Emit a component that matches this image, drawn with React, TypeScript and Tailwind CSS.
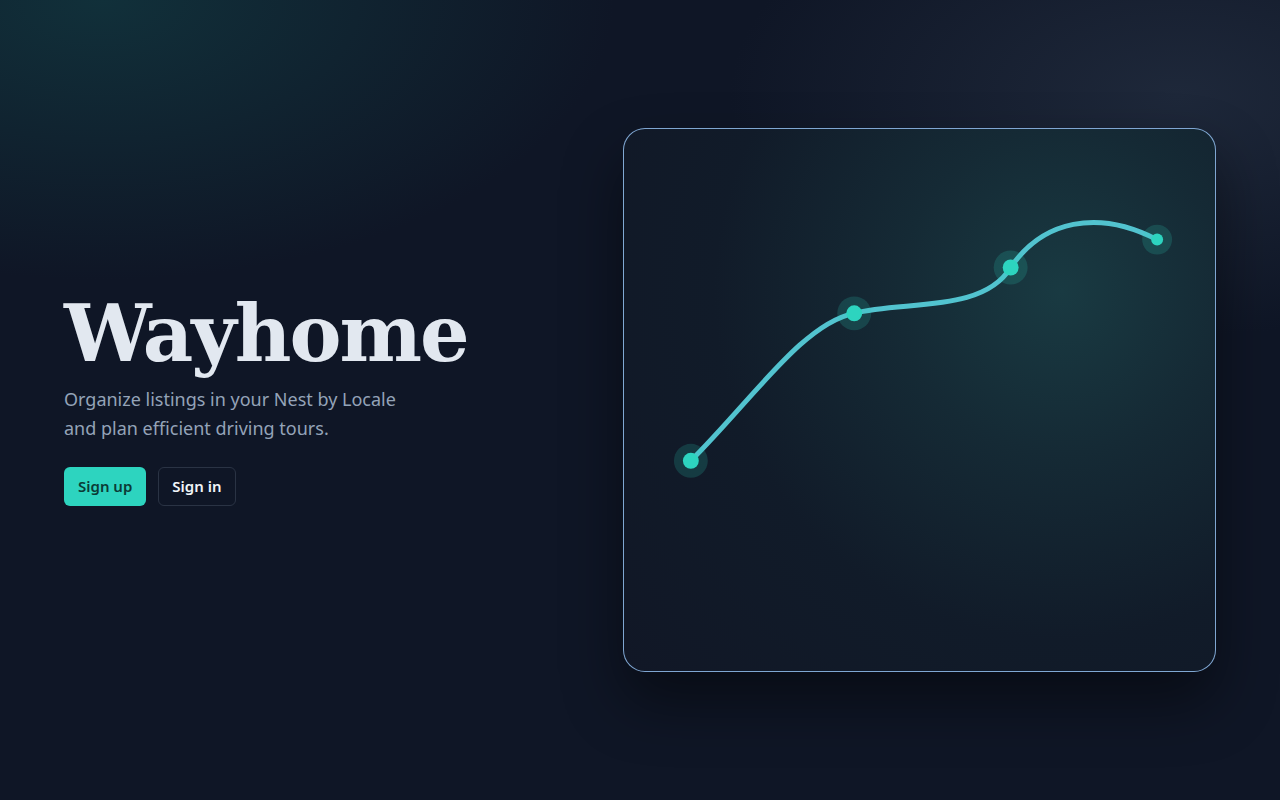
import React from "react";

const points = [
  { x: 67, y: 333, r: 8, halo: 17 },
  { x: 231, y: 185, r: 8, halo: 17 },
  { x: 388, y: 139, r: 8, halo: 17 },
  { x: 535, y: 111, r: 6, halo: 15 },
];

const RouteCard: React.FC = () => (
  <div className="w-[593px] h-[544px] shrink-0 rounded-[22px] border border-[#93bff0]/85 bg-[radial-gradient(circle_at_74%_30%,#193a42_0%,#152a35_28%,#111b29_60%,#111726_100%)] shadow-[0_30px_60px_rgba(0,0,0,0.45)] overflow-hidden">
    <svg viewBox="0 0 593 544" className="w-full h-full">
      <path
        d="M67 333 C130 270, 180 195, 231 185 C280 172, 360 185, 388 139 C420 92, 475 80, 535 111"
        fill="none"
        stroke="#52c3cf"
        strokeWidth="5"
        strokeLinecap="round"
      />
      {points.map((p) => (
        <g key={p.x}>
          <circle cx={p.x} cy={p.y} r={p.halo} fill="#2dd4bf" fillOpacity="0.18" />
          <circle cx={p.x} cy={p.y} r={p.r} fill="#2dd4bf" />
        </g>
      ))}
    </svg>
  </div>
);

export default function App() {
  return (
    <div className="relative w-full h-[800px] overflow-hidden bg-[#0f1626] font-['Noto_Sans',sans-serif]">
      <div className="absolute inset-0 bg-[radial-gradient(ellipse_40%_35%_at_8%_0%,#11303a_0%,rgba(15,22,38,0)_100%)]" />
      <div className="absolute inset-0 bg-[radial-gradient(ellipse_35%_30%_at_92%_12%,#1e283a_0%,rgba(15,22,38,0)_100%)]" />
      <div className="relative flex items-center justify-between h-full pl-16 pr-16">
        <div className="flex flex-col">
          <h1 className="font-['DejaVu_Serif',serif] font-bold text-[78px] leading-none tracking-[-2px] text-[#e2e8f0]">
            Wayhome
          </h1>
          <p className="mt-[12px] text-[18px] leading-[29px] text-[#94a3b8] w-[340px]">
            Organize listings in your Nest by Locale and plan efficient driving tours.
          </p>
          <div className="flex gap-3 mt-[24px]">
            <button className="h-[39px] px-[14px] rounded-md bg-[#2dd4bf] text-[#0b3b36] text-[15px] font-semibold">
              Sign up
            </button>
            <button className="h-[39px] px-[13px] rounded-md border border-[#2a3344] text-[#f1f5f9] text-[15px] font-semibold">
              Sign in
            </button>
          </div>
        </div>
        <RouteCard />
      </div>
    </div>
  );
}
